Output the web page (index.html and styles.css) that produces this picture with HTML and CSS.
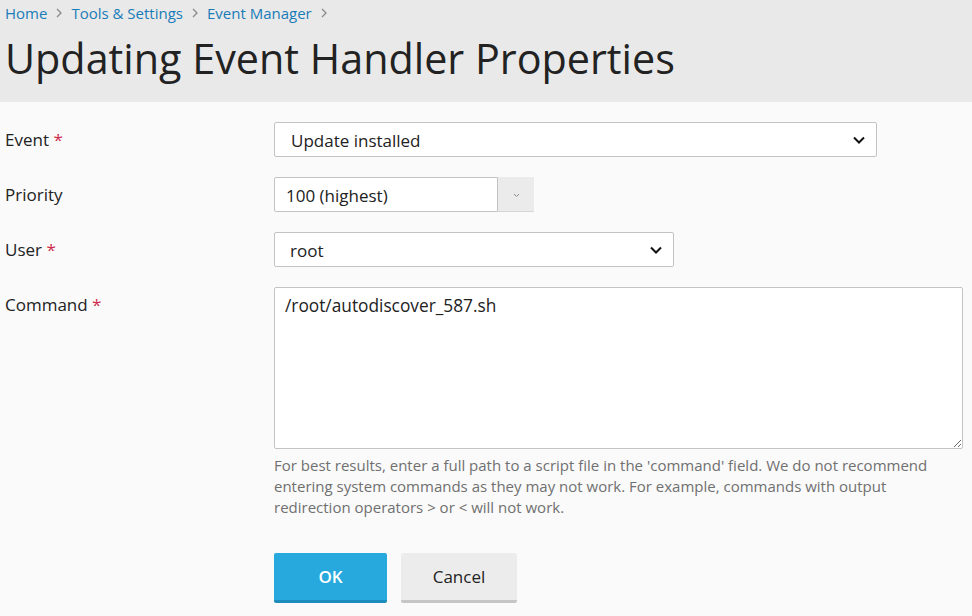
FILE: index.html
```html
<!DOCTYPE html>
<html lang="en">
<head>
<meta charset="utf-8">
<title>Updating Event Handler Properties</title>
<link rel="stylesheet" href="styles.css">
</head>
<body>
<header class="page-header">
  <nav class="breadcrumbs">
    <a href="#">Home</a><span class="sep"><svg width="8" height="10" viewBox="0 0 8 10"><path d="M2 1l4 4-4 4" fill="none" stroke="#8a8a8a" stroke-width="1.3"/></svg></span>
    <a href="#">Tools &amp; Settings</a><span class="sep"><svg width="8" height="10" viewBox="0 0 8 10"><path d="M2 1l4 4-4 4" fill="none" stroke="#8a8a8a" stroke-width="1.3"/></svg></span>
    <a href="#">Event Manager</a><span class="sep"><svg width="8" height="10" viewBox="0 0 8 10"><path d="M2 1l4 4-4 4" fill="none" stroke="#8a8a8a" stroke-width="1.3"/></svg></span>
  </nav>
  <h1 class="title">Updating Event Handler Properties</h1>
</header>
<main class="content">
  <form class="form">
    <div class="row">
      <label class="label">Event <span class="req">*</span></label>
      <div class="field">
        <div class="select select-event">
          <span class="select-text">Update installed</span>
          <svg class="chev" width="12" height="8" viewBox="0 0 12 8"><path d="M1 1.5l5 5 5-5" fill="none" stroke="#111" stroke-width="2"/></svg>
        </div>
      </div>
    </div>
    <div class="row">
      <label class="label">Priority</label>
      <div class="field">
        <div class="combo">
          <div class="combo-input">100 (highest)</div>
          <div class="combo-btn"><svg width="7" height="5" viewBox="0 0 7 5"><path d="M1 1l2.5 2.5L6 1" fill="none" stroke="#8a8a8a" stroke-width="1"/></svg></div>
        </div>
      </div>
    </div>
    <div class="row">
      <label class="label">User <span class="req">*</span></label>
      <div class="field">
        <div class="select select-user">
          <span class="select-text">root</span>
          <svg class="chev" width="12" height="8" viewBox="0 0 12 8"><path d="M1 1.5l5 5 5-5" fill="none" stroke="#111" stroke-width="2"/></svg>
        </div>
      </div>
    </div>
    <div class="row">
      <label class="label">Command <span class="req">*</span></label>
      <div class="field">
        <textarea class="textarea">/root/autodiscover_587.sh</textarea>
        <p class="hint">For best results, enter a full path to a script file in the 'command' field. We do not recommend entering system commands as they may not work. For example, commands with output redirection operators &gt; or &lt; will not work.</p>
      </div>
    </div>
    <div class="actions">
      <button type="button" class="btn btn-primary">OK</button>
      <button type="button" class="btn btn-default">Cancel</button>
    </div>
  </form>
</main>
</body>
</html>
```

FILE: styles.css
```css
* { box-sizing: border-box; }
html, body { margin: 0; padding: 0; }
body {
  background: #fafafa;
  font-family: "Open Sans", "Liberation Sans", sans-serif;
  color: #222;
  width: 972px;
  height: 616px;
  overflow: hidden;
}
.page-header {
  background: #e9e9e9;
  padding: 2px 5px 0;
  height: 102px;
}
.breadcrumbs {
  display: flex;
  align-items: center;
  font-size: 15px;
  line-height: 22px;
}
.breadcrumbs a {
  color: #1a7cb8;
  text-decoration: none;
}
.breadcrumbs .sep {
  display: inline-flex;
  align-items: center;
  margin: 0 8px 0 8px;
}
.title {
  margin: 6px 0 0;
  font-size: 41.3px;
  font-weight: 500;
  line-height: 56px;
  color: #222;
  letter-spacing: 0;
}
.content {
  padding: 20px 5px 0;
}
.row {
  display: grid;
  grid-template-columns: 269px 1fr;
  align-items: start;
  margin-bottom: 20px;
}
.label {
  font-size: 17px;
  height: 35px;
  line-height: 34px;
  padding-top: 1px;
  color: #222;
}
.req { color: #d02b4a; }
.select {
  position: relative;
  height: 35px;
  background: #fff;
  border: 1px solid #c3c3c3;
  border-radius: 2px;
  font-size: 17px;
  line-height: 35px;
  padding-left: 16px;
  color: #222;
}
.select-event { width: 603px; }
.select-user { width: 400px; padding-left: 15px; }
.chev {
  position: absolute;
  right: 11px;
  top: 13px;
}
.combo {
  display: flex;
  width: 260px;
  height: 35px;
}
.combo-input {
  width: 224px;
  background: #fff;
  border: 1px solid #c3c3c3;
  border-radius: 2px 0 0 2px;
  font-size: 17px;
  line-height: 35px;
  padding-left: 11px;
  color: #222;
}
.combo-btn {
  flex: 1;
  background: #ebebeb;
  border-bottom: 1px solid #d6d6d6;
  display: flex;
  align-items: center;
  justify-content: center;
  padding-top: 2px;
}
.textarea {
  display: block;
  width: 689px;
  height: 162px;
  background: #fff;
  border: 1px solid #c3c3c3;
  border-radius: 2px;
  font-family: "Open Sans", "Liberation Sans", sans-serif;
  font-size: 17.3px;
  line-height: 24px;
  padding: 6px 10px;
  color: #222;
  margin: 0;
}
.hint {
  margin: 6px 0 0;
  font-size: 15px;
  line-height: 21px;
  color: #707070;
  width: 689px;
}
.actions {
  display: flex;
  gap: 14px;
  padding-left: 269px;
  margin-top: 35px;
}
.btn {
  height: 50px;
  border: 0;
  border-radius: 2px;
  font-family: "Open Sans", "Liberation Sans", sans-serif;
  font-size: 17px;
  padding: 0;
}
.btn-primary {
  width: 113px;
  background: #28a9de;
  border-bottom: 3px solid #1d8dbd;
  color: #fff;
  font-weight: 600;
}
.btn-default {
  width: 116px;
  background: #ececec;
  border-bottom: 3px solid #c6c6c6;
  color: #222;
}
```
